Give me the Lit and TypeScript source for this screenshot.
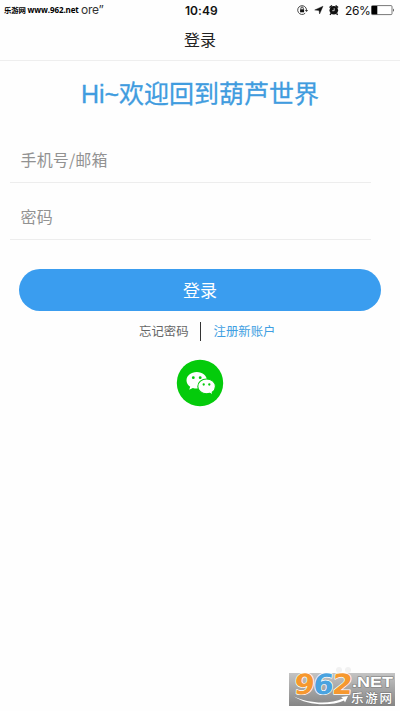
import { LitElement, html, css } from "lit";
import { customElement } from "lit/decorators.js";

@customElement("status-bar")
class StatusBar extends LitElement {
  static styles = css`
    :host { display: grid; grid-template-columns: 185px 112px 1fr; height: 20px; align-items: center; color: #111;
      font-family: Inter, "Noto Sans CJK SC", sans-serif; white-space: nowrap; }
    .left { display: flex; align-items: center; gap: 3px; padding-left: 4px; }
    .site { font: 700 8px/20px "Open Sans", "Noto Sans CJK SC", sans-serif; color: #000; letter-spacing: -0.1px; width: 74px; }
    .cn { font-size: 7.4px; letter-spacing: -0.2px; }
    .carrier { font: 400 12px/18px Inter, sans-serif; color: #333; letter-spacing: -0.2px; }
    .time { font-size: 12px; font-weight: 600; letter-spacing: 0.05px; }
    .right { display: flex; align-items: center; }
    .pct { font-size: 12px; margin: 0 2px 0 5px; width: 24px; letter-spacing: -0.35px; }
    svg { display: block; }
  `;
  render() {
    return html`
      <div class="left"><span class="site"><span class="cn">乐游网</span> www.962.net</span><span class="carrier">ore”</span></div>
      <div class="time">10:49</div>
      <div class="right">
        <svg width="43" height="14" viewBox="0 0 43 14">
          <path d="M8.2 10.2A4.4 4.4 0 1 1 9.5 7" fill="none" stroke="#333" stroke-width=".9"/>
          <path d="M7.9 7h3.2L9.5 9z" fill="#333"/>
          <rect x="3.1" y="6.3" width="4" height="3" fill="#111"/>
          <path d="M3.9 6.4V5.2a1.2 1.2 0 0 1 2.4 0v1.2" fill="none" stroke="#111" stroke-width=".8"/>
          <path d="M26 3.2 22.6 11 22 7.4 17.7 7z" fill="#111" stroke="#111" stroke-width=".4"/>
          <circle cx="36.8" cy="7.3" r="4.3" fill="#111"/>
          <path d="M32.5 4.6 35 2.5M41.1 4.6 38.6 2.5M34 10.5l-1 1.3M39.6 10.5l1 1.3" stroke="#111" stroke-width="1.3"/>
          <path d="M37.2 5.2v2.5h-2" fill="none" stroke="#fff" stroke-width=".7"/>
        </svg>
        <span class="pct">26%</span>
        <svg width="25" height="12" viewBox="0 0 25 12">
          <rect x=".5" y="1.6" width="20.5" height="9" rx="1" fill="#fff" stroke="#555" stroke-width=".8"/>
          <rect x=".7" y="2" width="5.6" height="8.3" fill="#000"/>
          <path d="M22 4.5a2 2 0 0 1 0 3.2z" fill="#333"/>
        </svg>
      </div>`;
  }
}

@customElement("wechat-badge")
class WechatBadge extends LitElement {
  static styles = css`:host, svg { display: block; }`;
  render() {
    return html`<svg width="48" height="48" viewBox="0 0 48 48">
      <circle cx="24" cy="24" r="23.2" fill="#04cb0b"/>
      <path d="M20.8 13.1c-5.9 0-10.3 3.7-10.3 8.4 0 2.6 1.4 4.8 3.7 6.3l-1 3 3.6-1.9c1.3.4 2.6.6 4 .6 5.8 0 10.2-3.4 10.2-8s-4.4-8.4-10.2-8.4z" fill="#fff"/>
      <path d="M30.6 20c-4.9 0-8.8 3.2-8.8 7.4s3.9 7.4 8.8 7.4c1.1 0 2.2-.2 3.2-.5l3.3 1.8-.9-2.8c1.9-1.3 3.2-3.5 3.2-5.9 0-4.2-3.9-7.4-8.8-7.4z" fill="#fff" stroke="#04cb0b" stroke-width="1.1"/>
      <g fill="#04cb0b"><circle cx="17.3" cy="18.7" r="1.4"/><circle cx="24.2" cy="18.7" r="1.4"/><circle cx="27.7" cy="25.5" r="1.15"/><circle cx="33.3" cy="25.5" r="1.15"/></g>
    </svg>`;
  }
}

@customElement("site-mark")
class SiteMark extends LitElement {
  static styles = css`
    :host, svg { display: block; }
    .num { font: 700 28px "DejaVu Sans", sans-serif; stroke: #fff; stroke-width: 1.4px; paint-order: stroke; stroke-linejoin: round; }
    .o { fill: #f6982f; }
    .b { fill: #4aa3df; }
    .net, .cn { fill: #fff; stroke: #777; stroke-width: 1px; paint-order: stroke; }
    .net { font: 700 14px "Liberation Sans", sans-serif; }
    .cn { font: 500 12.5px/1 "Noto Sans CJK SC", sans-serif; }
  `;
  render() {
    return html`<svg width="111" height="46" viewBox="0 0 111 46">
      <defs><linearGradient id="g" x2="0" y2="1"><stop stop-color="#c4c4c4"/><stop offset="1" stop-color="#858585"/></linearGradient></defs>
      <g fill="#f1f1f1"><circle cx="50" cy="5" r="3"/><circle cx="59" cy="5" r="3"/></g>
      <rect y="8" width="106" height="33" fill="url(#g)"/>
      <g transform="translate(3.5 0) skewX(-5)">
        <text class="num o" x="3.5" y="29" textLength="20.5" lengthAdjust="spacingAndGlyphs">9</text>
        <text class="num b" x="22.5" y="29" textLength="20.5" lengthAdjust="spacingAndGlyphs">6</text>
        <text class="num o" x="41.5" y="29" textLength="20.5" lengthAdjust="spacingAndGlyphs">2</text>
      </g>
      <path d="M5 31.5C18 38 40 40 54 33.5L52 32l7-1-3 6.5-1-2C41 42 17 40 5 31.5z" fill="#fff"/>
      <text class="net" x="63" y="21.5" textLength="41" lengthAdjust="spacingAndGlyphs">.NET</text>
      <text class="cn" x="62" y="38" textLength="41" lengthAdjust="spacing">乐游网</text>
    </svg>`;
  }
}

@customElement("app-root")
class AppRoot extends LitElement {
  static styles = css`
    :host { display: flex; flex-direction: column; height: 711px; background: #fefefe; overflow: hidden;
      font-family: "Liberation Sans", "Noto Sans CJK SC", sans-serif; }
    .bar { height: 40px; line-height: 42px; text-align: center; font-size: 16px; color: #222; border-bottom: 1px solid #eee; flex: none; }
    h1 { margin: 14px 0 0; height: 38px; text-align: center; font: 400 25px/38px "Liberation Sans", "Noto Sans CJK SC", sans-serif; color: #409cdf; -webkit-text-stroke: .3px #409cdf; }
    .field { margin-left: 10px; width: 350px; padding-left: 10.5px; border-bottom: 1px solid #ededed; color: #929292; height: 44px; font: 400 16px/42px "Noto Sans CJK SC", sans-serif; letter-spacing: .15px; }
    .account { margin-top: 25px; }
    .secret { margin-top: 12px; }
    .submit { margin: 28.5px 19px 0; height: 42.5px; border: 0; border-radius: 22px; background: #3a9def; color: #fff;
      font: 400 17px "Noto Sans CJK SC", sans-serif; padding: 0 0 1px; flex: none; }
    .links { display: flex; align-items: center; margin: 10px 0 0 139px; height: 20px; font-size: 12.4px; color: #666; white-space: nowrap; }
    .links i { width: 1.5px; height: 19px; background: #333; margin: 0 12.5px 0 11px; }
    .links a { color: #409ee2; }
    wechat-badge { margin: 18px 0 0 176px; }
    site-mark { margin: auto 0 0 289px; }
  `;
  render() {
    return html`
      <status-bar></status-bar>
      <div class="bar">登录</div>
      <h1>Hi~欢迎回到葫芦世界</h1>
      <div class="field account">手机号/邮箱</div>
      <div class="field secret">密码</div>
      <button class="submit">登录</button>
      <div class="links"><span>忘记密码</span><i></i><a>注册新账户</a></div>
      <wechat-badge></wechat-badge>
      <site-mark></site-mark>`;
  }
}
